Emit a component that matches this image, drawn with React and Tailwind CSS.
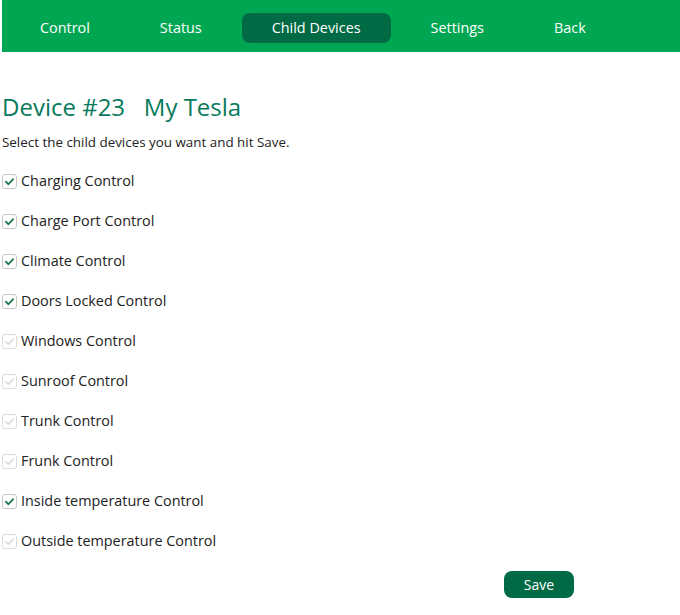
import React from "react";

const items = [
  ["Charging Control", true, true],
  ["Charge Port Control", true, true],
  ["Climate Control", true, true],
  ["Doors Locked Control", true, true],
  ["Windows Control", false, false],
  ["Sunroof Control", false, false],
  ["Trunk Control", false, false],
  ["Frunk Control", false, false],
  ["Inside temperature Control", true, true],
  ["Outside temperature Control", false, false],
];

function Box({ on }) {
  return (
    <span
      className={`flex h-[15px] w-[15px] shrink-0 items-center justify-center rounded-[3px] border ${
        on ? "border-[#c8c8c8] bg-white" : "border-[#dcdcdc] bg-white"
      }`}
    >
      <svg width="11" height="11" viewBox="0 0 12 12">
        <path
          d="M2 6.2 L4.8 9 L10 3.4"
          fill="none"
          stroke={on ? "#1d7a4c" : "#d4d4d4"}
          strokeWidth={on ? 2 : 1.4}
          strokeLinecap="round"
          strokeLinejoin="round"
        />
      </svg>
    </span>
  );
}

export default function App() {
  const nav = ["Control", "Status", "Child Devices", "Settings", "Back"];
  return (
    <div className="min-h-[615px] w-[680px] bg-white font-['Open_Sans',sans-serif] text-[#222]">
      <div className="ml-[2px] flex h-[52px] items-center gap-[10px] bg-[#00a651] pl-[8px] pt-[4px]">
        {nav.map((n) => (
          <div
            key={n}
            className={`flex h-[30px] items-center rounded-[8px] px-[30px] text-[14.4px] text-white ${
              n === "Child Devices" ? "bg-[#006a45]" : ""
            }`}
          >
            {n}
          </div>
        ))}
      </div>
      <div className="pl-[2px]">
        <h1 className="mt-[39px] text-[24px] leading-[32px] text-[#087a5c]">
          Device #23&nbsp;&nbsp;&nbsp;My Tesla
        </h1>
        <p className="mt-[9px] h-[20px] text-[13.4px] leading-[20px]">
          Select the child devices you want and hit Save.
        </p>
        <div className="mt-[9px]">
          {items.map(([label, on]) => (
            <div key={label} className="flex h-[40px] items-center gap-[4px] text-[14.4px]">
              <Box on={on} />
              <span>{label}</span>
            </div>
          ))}
        </div>
        <div className="ml-[502px] mt-[10px]">
          <button className="h-[27px] w-[70px] rounded-[8px] bg-[#006a45] text-[14px] text-white">
            Save
          </button>
        </div>
      </div>
    </div>
  );
}
